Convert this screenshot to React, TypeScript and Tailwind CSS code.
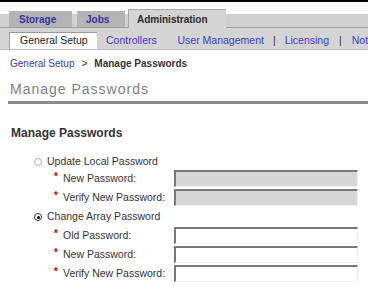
import React from 'react';

const fieldsTop = ['New Password:', 'Verify New Password:'];
const fieldsBottom = ['Old Password:', 'New Password:', 'Verify New Password:'];

function Field({ label, disabled, className }: { label: string; disabled?: boolean; className?: string }) {
  return (
    <div className={`flex items-center h-[17px] pl-[54px] ${className ?? ''}`}>
      <div className="w-[120px] flex items-center text-[10.5px] text-[#333]">
        <span className="text-[#cc0000] text-[10px] font-bold w-[9px] -mt-[5px]">*</span>
        <span>{label}</span>
      </div>
      <div
        className={`w-[184px] h-[17px] border-t-2 border-l-2 border-r border-b border-t-[#787878] border-l-[#787878] border-r-[#f0f0f0] border-b-[#f0f0f0] ${
          disabled ? 'bg-[#d6d6d6]' : 'bg-white'
        }`}
      />
    </div>
  );
}

function Radio({ label, checked, className }: { label: string; checked?: boolean; className?: string }) {
  return (
    <div className={`flex items-center h-[14px] pl-[34px] text-[10.5px] text-[#333] ${className ?? ''}`}>
      <span
        className={`w-[8px] h-[8px] rounded-full border flex items-center justify-center ${
          checked ? 'border-[#333] bg-white' : 'border-[#b0b0b0] bg-white'
        }`}
      >
        {checked && <span className="w-[3px] h-[3px] rounded-full bg-black" />}
      </span>
      <span className="ml-[5px]">{label}</span>
    </div>
  );
}

export default function App() {
  return (
    <div className="w-[368px] h-[296px] bg-white overflow-hidden font-['Liberation_Sans',Arial,sans-serif]">
      <div className="h-[2px] bg-black" />

      {/* main tabs */}
      <div className="flex items-end h-[19px] mt-[7px] text-[10px] font-bold">
        <div className="w-[9px] h-[14px] bg-[#d0d0d0] border-b border-[#9c9c9c]" />
        <div className="w-[63px] h-[17px] bg-[#b4b4b4] border-b border-[#9c9c9c] flex items-center pl-[10px] text-[#33339a]">
          Storage
        </div>
        <div className="w-[5px] h-[14px] bg-[#d0d0d0] border-b border-[#9c9c9c]" />
        <div className="w-[48px] h-[17px] bg-[#b4b4b4] border-b border-[#9c9c9c] flex items-center pl-[9px] text-[#33339a]">
          Jobs
        </div>
        <div className="w-[3px] h-[14px] bg-[#d0d0d0] border-b border-[#9c9c9c]" />
        <div className="w-[98px] h-[19px] bg-[#d4d4d4] border-t border-l border-[#a8a8a8] flex items-center pl-[8px] text-[#2a2a2a]">
          Administration
        </div>
        <div className="flex-1 h-[14px] bg-[#d0d0d0] border-b border-[#9c9c9c]" />
      </div>

      {/* sub tabs */}
      <div className="flex items-end h-[22px] bg-[#d4d4d4] border-b border-[#bcbcbc] text-[10.5px] whitespace-nowrap overflow-hidden">
        <div className="shrink-0 ml-[9px] w-[88px] h-[17px] bg-white border-t border-l border-[#9a9a9a] flex items-center pl-[10px] text-[#222]">
          General Setup
        </div>
        <div className="shrink-0 flex items-center h-[17px] ml-[9px] text-[#3a3acc]">
          <span>Controllers</span>
          <span className="mx-[9px] text-transparent">|</span>
          <span>User Management</span>
          <span className="mx-[9px] text-[#333]">|</span>
          <span>Licensing</span>
          <span className="mx-[10px] text-[#333]">|</span>
          <span>Notifications</span>
        </div>
      </div>

      {/* breadcrumb */}
      <div className="mt-[8px] pl-[10px] leading-[12px] text-[10px] flex">
        <span className="text-[#3a3acc]">General Setup</span>
        <span className="mx-[7px] text-[#333]">&gt;</span>
        <span className="font-bold text-[#333]">Manage Passwords</span>
      </div>

      {/* page title */}
      <div className="mt-[11px] pl-[10px] text-[14px] leading-[16px] tracking-[1px] text-[#808080]">Manage Passwords</div>
      <div className="mt-[4px] ml-[8px] h-[3px] bg-[#8a8a8a]" />

      {/* section */}
      <div className="mt-[22px] pl-[11px] text-[12px] leading-[14px] font-bold text-[#333]">Manage Passwords</div>

      <Radio label="Update Local Password" className="mt-[15px]" />
      {fieldsTop.map((f, i) => (
        <Field key={f} label={f} disabled className={i === 0 ? 'mt-[1px]' : 'mt-[2px]'} />
      ))}

      <Radio label="Change Array Password" checked className="mt-[4px]" />
      {fieldsBottom.map((f, i) => (
        <Field key={f + i} label={f} className={i === 0 ? 'mt-[3px]' : 'mt-[2px]'} />
      ))}
    </div>
  );
}
